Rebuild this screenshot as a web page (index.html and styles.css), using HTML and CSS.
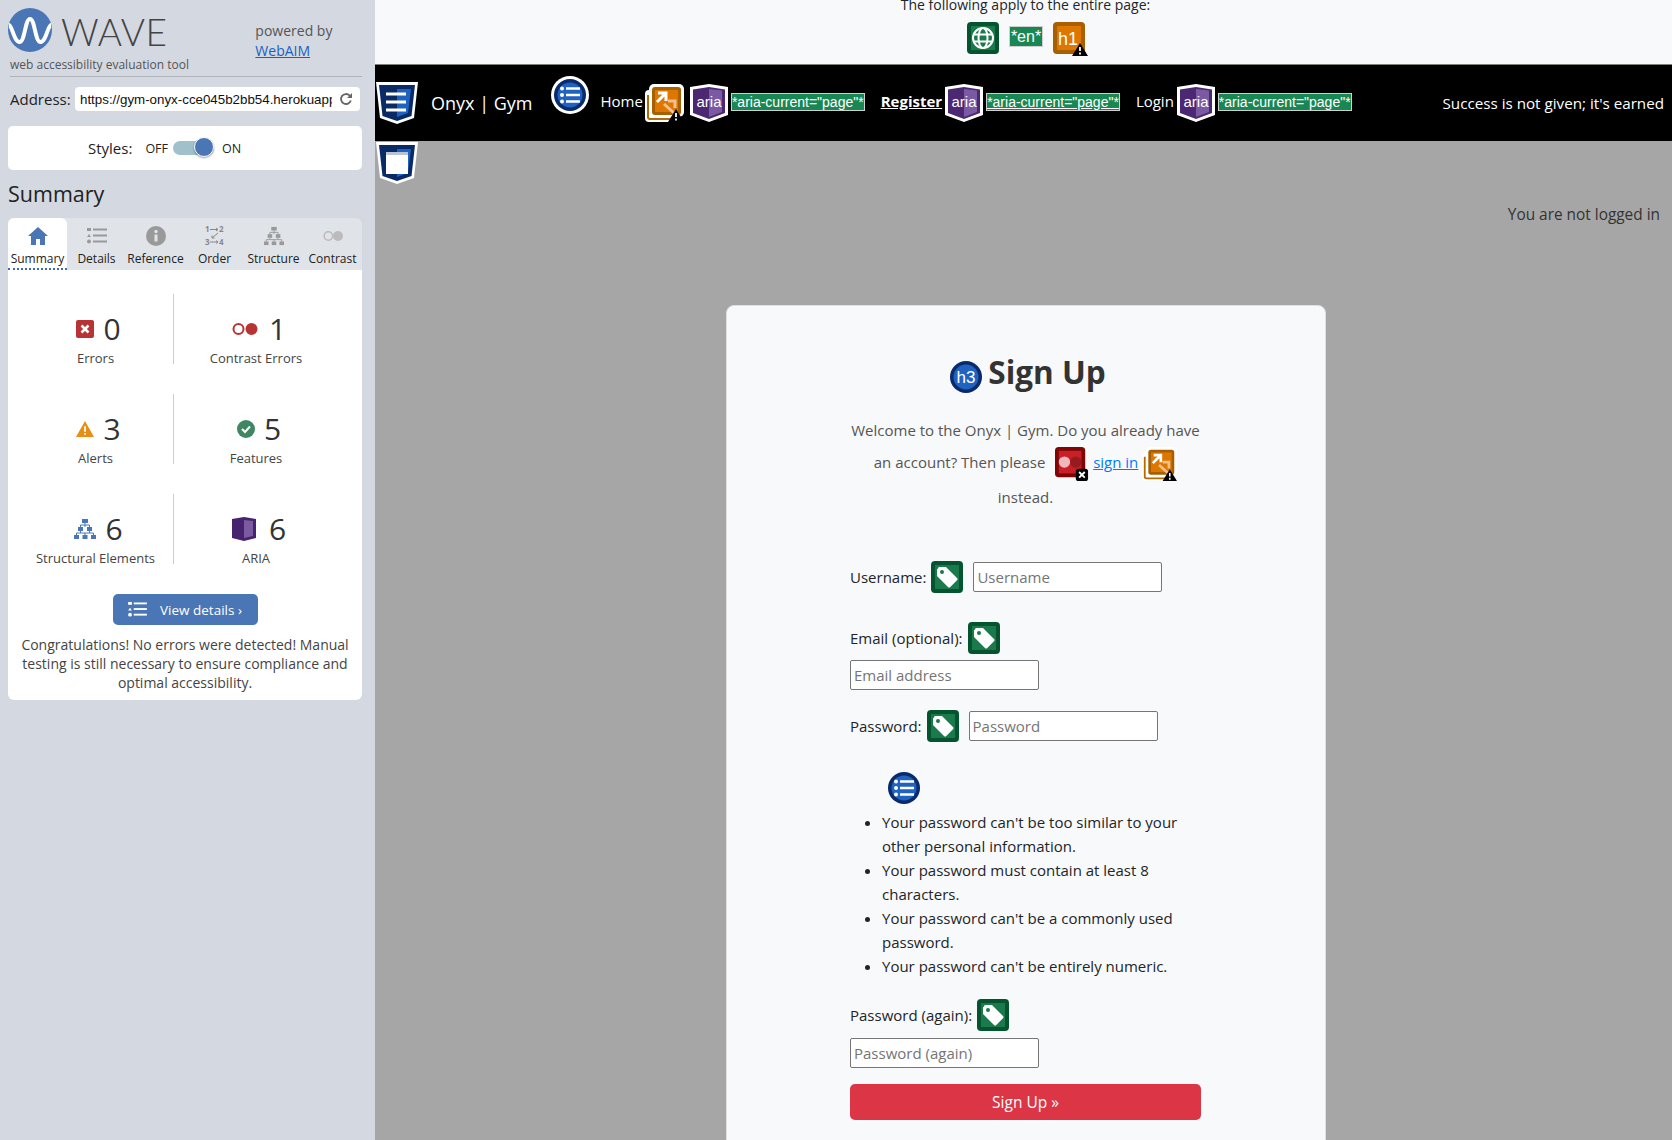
FILE: index.html
```html
<!DOCTYPE html>
<html lang="en">

<head>
    <meta charset="UTF-8">
    <meta name="viewport" content="width=device-width, initial-scale=1.0">
    <title>Onyx | Gym - Sign Up</title>
    <link rel="stylesheet" href="styles.css">
</head>

<body>
    <svg class="sprite" aria-hidden="true">
        <symbol id="tag" viewBox="0 0 32 32">
            <rect width="32" height="32" rx="4" fill="#04552f"/>
            <rect x="4" y="4" width="24" height="24" fill="#1a7a4b"/>
            <path d="M7 7.500C7 6.700 7.700 6 8.500 6H15L26 17C26.700 17.700 26.700 18.600 26 19.300L19.300 26C18.600 26.700 17.700 26.700 17 26L6 15V8.500z" fill="#fff"/>
            <circle cx="11" cy="11" r="2" fill="#1a7a4b"/>
        </symbol>
        <symbol id="aria" viewBox="0 0 38 38">
            <path d="M0 3L19 0L38 3V31L19 38L0 31z" fill="#fff"/>
            <path d="M3 5.500L19 3L35 5.500V29L19 35L3 29z" fill="#4c2772"/>
            <path d="M19 5L32 6.500V28L19 33z" fill="#7a5ba3"/>
        </symbol>
        <symbol id="extlink" viewBox="0 0 39 38">
            <rect x="0" y="6" width="32" height="32" rx="4" fill="#fff"/>
            <rect x="4" y="0" width="35" height="33" rx="5" fill="#fff"/>
            <path d="M3 11V33C3 34 4 35 5 35H28" fill="none" stroke="#b56a00" stroke-width="2"/>
            <rect x="7" y="3" width="29" height="28" rx="3" fill="#a85f00"/>
            <rect x="10" y="6" width="23" height="22" fill="#dd7700"/>
            <path d="M20 20L30 29M24 17H31V24" transform="translate(-1 0)" fill="none" stroke="#f2c08e" stroke-width="3"/>
            <path d="M13 9H21V17M21 9L12 18" fill="none" stroke="#fff" stroke-width="3"/>
            <path d="M23 38L31 25L39 38z" fill="#000"/>
            <path d="M31 29V33M31 34.500V36.500" stroke="#fff" stroke-width="1.800"/>
        </symbol>
        <symbol id="contrast" viewBox="0 0 36 36">
            <rect width="32" height="32" rx="4" fill="#7d0606"/>
            <rect x="4" y="4" width="24" height="24" fill="#c92027"/>
            <circle cx="10" cy="16" r="6" fill="#f1b8bb"/>
            <circle cx="22" cy="16" r="6" fill="#961a1e"/>
            <rect x="22" y="23" width="13" height="13" rx="3" fill="#000"/>
            <path d="M25.500 26.500L31.500 32.500M31.500 26.500L25.500 32.500" stroke="#fff" stroke-width="2"/>
        </symbol>
        <symbol id="list" viewBox="0 0 32 32">
            <circle cx="16" cy="16" r="16" fill="#0a2a6e"/>
            <circle cx="16" cy="16" r="12.500" fill="#1f62c0"/>
            <path d="M12 9.500H26M12 16H26M12 22.500H26" stroke="#fff" stroke-width="2.400"/>
            <circle cx="8" cy="9.500" r="2" fill="#fff"/>
            <circle cx="8" cy="16" r="2" fill="#fff"/>
            <circle cx="8" cy="22.500" r="2" fill="#fff"/>
        </symbol>
        <symbol id="shield" viewBox="0 0 42 42">
            <path d="M0 0H42L38 36L21 42L4 36z" fill="#fff"/>
            <path d="M3 3H39L35.500 34L21 39L6.500 34z" fill="#0a2a66"/>
            <path d="M21 7H35L32 31L21 35z" fill="#1f62c0"/>
        </symbol>
        <symbol id="bullets" viewBox="0 0 20 16">
            <rect x="0" y="0" width="4" height="3"/>
            <path d="M2 6L4 9H0z"/>
            <circle cx="2" cy="13.500" r="2"/>
            <rect x="6" y="0.500" width="14" height="2"/>
            <rect x="6" y="6.500" width="14" height="2"/>
            <rect x="6" y="12.500" width="14" height="2"/>
        </symbol>
        <symbol id="tree" viewBox="0 0 22 20">
            <rect x="8" y="0" width="6" height="4"/>
            <rect x="4" y="8" width="5" height="4"/>
            <rect x="13" y="8" width="5" height="4"/>
            <rect x="0" y="16" width="5" height="4"/>
            <rect x="8.500" y="16" width="5" height="4"/>
            <rect x="17" y="16" width="5" height="4"/>
            <path d="M11 4V8M6.500 6H15.500V8M6.500 6V8M6.500 12V14M15.500 12V14M2.500 14H19.500V16M2.500 14V16M11 14V16" fill="none" stroke="currentColor"/>
        </symbol>
    </svg>

    <aside class="sidebar">
        <div class="brand">
            <svg class="brand-logo" viewBox="0 0 44 44">
                <circle cx="22" cy="22" r="22" fill="#4a76b5"/>
                <path d="M1 17C4 17 6 34 11.500 34C17 34 17 11 22 11C27 11 27 34 32.500 34C38 34 40 17 43 17" fill="none" stroke="#fff" stroke-width="4"/>
            </svg>
            <span class="brand-name">WAVE</span>
            <div class="powered">powered by<br><a href="#">WebAIM</a></div>
        </div>
        <div class="tagline">web accessibility evaluation tool</div>

        <div class="address">
            <label class="address-label" for="address">Address:</label>
            <div class="address-box">
                <input class="address-input" id="address" type="text" value="https://gym-onyx-cce045b2bb54.herokuapp.com/accounts/signup/">
                <svg class="reload" viewBox="0 0 14 14"><path d="M11.800 8.500A5 5 0 1 1 10.500 3.400L12.500 5" fill="none" stroke="#666" stroke-width="1.800"/><path d="M13 1V6H8z" fill="#666"/></svg>
            </div>
        </div>

        <div class="styles-box">
            <span class="styles-label">Styles:</span>
            <span class="styles-off">OFF</span>
            <span class="toggle"><span class="toggle-knob"></span></span>
            <span class="styles-on">ON</span>
        </div>

        <h2 class="summary-title">Summary</h2>

        <div class="tabs">
            <div class="tab active">
                <svg class="tab-icon" viewBox="0 0 20 18"><path d="M10 0L20 9H17V18H12V12H8V18H3V9H0z" fill="#4a76b5"/></svg>
                <span>Summary</span>
            </div>
            <div class="tab">
                <svg class="tab-icon grey"><use href="#bullets"/></svg>
                <span>Details</span>
            </div>
            <div class="tab">
                <svg class="tab-icon" viewBox="0 0 20 20"><circle cx="10" cy="10" r="10" fill="#999"/><rect x="8.500" y="8.500" width="3" height="7" fill="#e0e3e8"/><circle cx="10" cy="5.500" r="1.700" fill="#e0e3e8"/></svg>
                <span>Reference</span>
            </div>
            <div class="tab">
                <svg class="tab-icon order" viewBox="0 -3 20 26">
                    <text class="order-digit" x="0" y="6">1</text>
                    <text class="order-digit" x="14" y="6">2</text>
                    <text class="order-digit" x="0" y="19">3</text>
                    <text class="order-digit" x="14" y="19">4</text>
                    <path d="M5 3.500H13M11 2L13 3.500L11 5M5 16H13M11 14.500L13 16L11 17.500M13 7L7 12M7 9.500V12H9.500" fill="none" stroke="#888"/>
                </svg>
                <span>Order</span>
            </div>
            <div class="tab">
                <svg class="tab-icon grey"><use href="#tree"/></svg>
                <span>Structure</span>
            </div>
            <div class="tab">
                <svg class="tab-icon" viewBox="0 0 26 14"><circle cx="7" cy="7" r="5.500" fill="none" stroke="#bbb" stroke-width="2"/><circle cx="19.500" cy="7" r="6.500" fill="#bbb"/></svg>
                <span>Contrast</span>
            </div>
        </div>

        <div class="panel">
            <div class="stats">
                <div class="stat">
                    <div class="stat-main">
                        <svg class="stat-icon" viewBox="0 0 18 18"><rect width="18" height="18" rx="2" fill="#b83333"/><path d="M5.500 5.500L12.500 12.500M12.500 5.500L5.500 12.500" stroke="#fff" stroke-width="2.500"/></svg>
                        <span class="stat-num">0</span>
                    </div>
                    <div class="stat-label">Errors</div>
                </div>
                <div class="stat">
                    <div class="stat-main">
                        <svg class="stat-icon wide" viewBox="0 0 26 14"><circle cx="6.500" cy="7" r="5" fill="none" stroke="#b83333" stroke-width="2"/><circle cx="19.500" cy="7" r="6" fill="#b83333"/></svg>
                        <span class="stat-num">1</span>
                    </div>
                    <div class="stat-label">Contrast Errors</div>
                </div>
                <div class="stat">
                    <div class="stat-main">
                        <svg class="stat-icon" viewBox="0 0 20 18"><path d="M10 0L20 18H0z" fill="#e88e14"/><rect x="9" y="6" width="2" height="6" fill="#fff"/><rect x="9" y="13.500" width="2" height="2" fill="#fff"/></svg>
                        <span class="stat-num">3</span>
                    </div>
                    <div class="stat-label">Alerts</div>
                </div>
                <div class="stat">
                    <div class="stat-main">
                        <svg class="stat-icon" viewBox="0 0 18 18"><circle cx="9" cy="9" r="9" fill="#3f8763"/><path d="M5 9L8 12L13 6.500" fill="none" stroke="#fff" stroke-width="2"/></svg>
                        <span class="stat-num">5</span>
                    </div>
                    <div class="stat-label">Features</div>
                </div>
                <div class="stat">
                    <div class="stat-main">
                        <svg class="stat-icon blue"><use href="#tree"/></svg>
                        <span class="stat-num">6</span>
                    </div>
                    <div class="stat-label">Structural Elements</div>
                </div>
                <div class="stat">
                    <div class="stat-main">
                        <svg class="stat-icon book" viewBox="0 0 24 24"><path d="M0 2L12 0L24 2V21L12 24L0 21z" fill="#46226f"/><path d="M12 3L21 4V19L12 21z" fill="#7b5a9f"/></svg>
                        <span class="stat-num">6</span>
                    </div>
                    <div class="stat-label">ARIA</div>
                </div>
            </div>
            <button class="details-btn">
                <svg class="details-icon"><use href="#bullets"/></svg>
                View details &#8250;
            </button>
            <p class="congrats">Congratulations! No errors were detected! Manual testing is still necessary to ensure compliance and optimal accessibility.</p>
        </div>
    </aside>

    <main class="page">
        <div class="page-top">
            <p class="page-note">The following apply to the entire page:</p>
            <div class="page-icons">
                <svg class="wave-icon" viewBox="0 0 32 32">
                    <rect width="32" height="32" rx="4" fill="#04552f"/>
                    <rect x="4" y="4" width="24" height="24" fill="#1a7a4b"/>
                    <g fill="none" stroke="#fff" stroke-width="2">
                        <circle cx="16" cy="16" r="10"/>
                        <ellipse cx="16" cy="16" rx="4.500" ry="10"/>
                        <path d="M7 12.500H25M7 19.500H25"/>
                    </g>
                </svg>
                <span class="badge lang">*en*</span>
                <svg class="wave-icon heading" viewBox="0 0 36 36">
                    <rect width="32" height="32" rx="4" fill="#a85f00"/>
                    <rect x="4" y="4" width="24" height="24" fill="#dd7700"/>
                    <text class="icon-text" x="15" y="23" text-anchor="middle" font-size="18">h1</text>
                    <path d="M19 34L27 21L35 34z" fill="#000"/>
                    <path d="M27 25V29M27 30.500V32.500" stroke="#fff" stroke-width="1.800"/>
                </svg>
            </div>
        </div>

        <nav class="navbar">
            <svg class="shield"><use href="#shield"/><path d="M10 12H30M10 20H30M10 28H30" stroke="#fff" stroke-width="3"/></svg>
            <a class="nav-brand" href="#">Onyx | Gym</a>
            <svg class="nav-list" viewBox="0 0 38 38">
                <circle cx="19" cy="19" r="19" fill="#fff"/>
                <svg x="3" y="3" width="32" height="32"><use href="#list"/></svg>
            </svg>
            <a class="nav-link" href="#">Home</a>
            <svg class="ext-icon"><use href="#extlink"/></svg>
            <svg class="aria-icon" viewBox="0 0 38 38"><use href="#aria" width="38" height="38"/><text class="icon-text" x="19" y="23" text-anchor="middle" font-size="15">aria</text></svg>
            <span class="badge">*aria-current="page"*</span>
            <a class="nav-link current" href="#"><span class="current-text">Register</span>
                <svg class="aria-icon" viewBox="0 0 38 38"><use href="#aria" width="38" height="38"/><text class="icon-text" x="19" y="23" text-anchor="middle" font-size="15">aria</text></svg>
                <span class="badge">*aria-current="page"*</span>
            </a>
            <a class="nav-link login" href="#">Login</a>
            <svg class="aria-icon" viewBox="0 0 38 38"><use href="#aria" width="38" height="38"/><text class="icon-text" x="19" y="23" text-anchor="middle" font-size="15">aria</text></svg>
            <span class="badge">*aria-current="page"*</span>
            <span class="motto">Success is not given; it's earned</span>
        </nav>

        <svg class="shield main-mark"><use href="#shield"/><rect x="10" y="10" width="22" height="22" fill="#fff"/><rect x="10" y="10" width="22" height="3" fill="#b9c3d6"/></svg>

        <p class="login-note">You are not logged in</p>

        <section class="card">
            <div class="card-body">
                <h3 class="card-title">
                    <svg class="title-icon" viewBox="0 0 32 32"><circle cx="16" cy="16" r="16" fill="#0a2a6e"/><circle cx="16" cy="16" r="12.500" fill="#1f62c0"/><text class="icon-text" x="16" y="22" text-anchor="middle" font-size="17">h3</text></svg>
                    Sign Up
                </h3>
                <p class="intro">Welcome to the Onyx | Gym. Do you already have an account? Then please
                    <svg class="contrast-icon"><use href="#contrast"/></svg>
                    <a href="#">sign in</a>
                    <svg class="ext-icon small"><use href="#extlink"/></svg>
                    <br>instead.</p>

                <form class="form">
                    <div class="field first">
                        <label for="username">Username:</label>
                        <svg class="tag-icon"><use href="#tag"/></svg>
                        <input id="username" type="text" placeholder="Username">
                    </div>
                    <div class="field stacked">
                        <div class="field-head">
                            <label for="email">Email (optional):</label>
                            <svg class="tag-icon"><use href="#tag"/></svg>
                        </div>
                        <input id="email" type="text" placeholder="Email address">
                    </div>
                    <div class="field">
                        <label for="password1">Password:</label>
                        <svg class="tag-icon"><use href="#tag"/></svg>
                        <input id="password1" type="password" placeholder="Password">
                    </div>
                    <svg class="help-icon"><use href="#list"/></svg>
                    <ul class="help">
                        <li>Your password can't be too similar to your other personal information.</li>
                        <li>Your password must contain at least 8 characters.</li>
                        <li>Your password can't be a commonly used password.</li>
                        <li>Your password can't be entirely numeric.</li>
                    </ul>
                    <div class="field stacked again">
                        <div class="field-head">
                            <label for="password2">Password (again):</label>
                            <svg class="tag-icon"><use href="#tag"/></svg>
                        </div>
                        <input id="password2" type="password" placeholder="Password (again)">
                    </div>
                    <button class="submit" type="button">Sign Up &raquo;</button>
                </form>
            </div>
        </section>
    </main>
</body>

</html>
```

FILE: styles.css
```css
html,
body {
    height: 100%;
    margin: 0;
    overflow: hidden;
}

body {
    display: flex;
    font-family: "Open Sans", "Noto Sans", sans-serif;
    color: #212529;
}

.sprite {
    display: none;
}

/* sidebar */

.sidebar {
    width: 375px;
    flex-shrink: 0;
    box-sizing: border-box;
    padding: 8px 13px 0 8px;
    background-color: #d4d8e0;
    color: #333;
}

.brand {
    display: flex;
    align-items: flex-start;
}

.brand-logo {
    width: 44px;
    height: 44px;
}

.brand-name {
    margin: 2px 0 0 9px;
    font-family: "Lato", sans-serif;
    font-weight: 300;
    font-size: 37px;
    line-height: 44px;
    letter-spacing: 0.5px;
    color: #444;
}

.powered {
    margin: 13px 0 0 88px;
    font-size: 14px;
    line-height: 20px;
    color: #555;
}

.powered a {
    color: #1a5fc4;
}

.tagline {
    margin: -4px 0 0 2px;
    padding-bottom: 3px;
    font-size: 12px;
    line-height: 16px;
    color: #555;
    border-bottom: 1px solid #b0b3b8;
}

.address {
    display: flex;
    align-items: center;
    margin-top: 10px;
}

.address-label {
    width: 67px;
    padding-left: 2px;
    box-sizing: border-box;
    font-size: 15px;
    color: #222;
}

.address-box {
    display: flex;
    align-items: center;
    width: 285px;
    height: 24px;
    background-color: #fff;
    border-radius: 4px;
}

.address-input {
    width: 252px;
    margin-left: 5px;
    padding: 0;
    border: 0;
    outline: 0;
    font-family: "Liberation Sans", Arial, sans-serif;
    font-size: 13.330px;
    color: #111;
}

.reload {
    width: 14px;
    height: 14px;
    margin-left: 7px;
}

.styles-box {
    display: flex;
    align-items: center;
    height: 44px;
    margin-top: 15px;
    padding-left: 80px;
    background-color: #fff;
    border-radius: 5px;
    font-size: 12.500px;
    color: #222;
}

.styles-label {
    margin-right: 13px;
    font-size: 15px;
}

.toggle {
    position: relative;
    width: 41px;
    height: 14px;
    margin: 0 8px 0 5px;
    background-color: #a0c0cc;
    border-radius: 7px;
}

.toggle-knob {
    position: absolute;
    top: -4px;
    right: 0;
    width: 20px;
    height: 20px;
    background-color: #4a76b5;
    border: 1px solid #fff;
    box-sizing: border-box;
    border-radius: 50%;
    box-shadow: 0 1px 2px rgba(0, 0, 0, 0.4);
}

.summary-title {
    margin: 9px 0 10px;
    font-size: 21.500px;
    font-weight: 400;
    line-height: 29px;
    color: #222;
}

.tabs {
    display: flex;
    height: 52px;
    background-color: #e0e3e8;
    border-radius: 6px 6px 0 0;
}

.tab {
    display: flex;
    flex-direction: column;
    align-items: center;
    justify-content: flex-end;
    width: 59px;
    height: 52px;
    box-sizing: border-box;
    padding-bottom: 3px;
    font-size: 12px;
    line-height: 16px;
    color: #222;
    white-space: nowrap;
}

.tab.active {
    background-color: #fff;
    border-radius: 6px 6px 0 0;
    border-bottom: 2px dotted #3d6bb0;
    padding-bottom: 1px;
}

.tab-icon {
    width: 20px;
    height: 20px;
    margin-bottom: 5px;
}

.tab-icon.grey {
    fill: #999;
    color: #999;
}

.tab-icon.order {
    height: 26px;
    margin-bottom: 2px;
}

.order-digit {
    font-family: "Open Sans", sans-serif;
    font-size: 8px;
    font-weight: 700;
    fill: #888;
}

.panel {
    height: 430px;
    box-sizing: border-box;
    padding-top: 24px;
    background-color: #fff;
    border-radius: 0 0 6px 6px;
    text-align: center;
}

.stats {
    display: grid;
    grid-template-columns: 166px 1fr;
    row-gap: 30px;
}

.stat {
    height: 70px;
}

.stat:nth-child(odd) {
    box-sizing: border-box;
    padding-left: 10px;
    border-right: 1px solid #ccc;
}

.stat:nth-child(even) {
    padding-right: 24px;
}

.stat-main {
    display: flex;
    align-items: center;
    justify-content: center;
    height: 40px;
    margin-top: 15px;
    padding-left: 6px;
}

.stat-icon {
    width: 18px;
    height: 18px;
    margin-right: 9px;
}

.stat-icon.wide {
    width: 26px;
    margin-right: 11px;
}

.stat-icon.blue {
    width: 22px;
    height: 20px;
    fill: #4a76b5;
    color: #4a76b5;
}

.stat-icon.book {
    width: 24px;
    height: 24px;
    margin-right: 13px;
}

.stat-num {
    font-size: 30px;
    line-height: 40px;
    color: #333;
}

.stat-label {
    font-size: 13px;
    line-height: 18px;
    color: #444;
}

.details-btn {
    display: inline-flex;
    align-items: center;
    justify-content: center;
    width: 145px;
    height: 31px;
    margin-top: 30px;
    padding: 0;
    background-color: #4a76b5;
    border: 0;
    border-radius: 5px;
    font-family: inherit;
    font-size: 13.500px;
    color: #fff;
}

.details-icon {
    width: 19px;
    height: 15px;
    margin-right: 13px;
    fill: #fff;
}

.congrats {
    margin: 10px 12px 0;
    font-size: 14px;
    line-height: 19px;
    color: #444;
}

/* page */

.page {
    flex: 1;
    min-width: 0;
    height: 1140px;
    overflow: hidden;
    background-color: #a6a6a6;
}

.page-top {
    display: flex;
    flex-direction: column;
    justify-content: flex-end;
    align-items: center;
    height: 64px;
    overflow: hidden;
    background-color: #f8f9fa;
    border-bottom: 1px solid #7c8278;
}

.page-note {
    margin: 0 0 7px 4px;
    font-size: 14px;
    line-height: 20px;
    color: #212529;
}

.page-icons {
    display: flex;
    align-items: flex-start;
    height: 34px;
    margin: 0 0 8px 5px;
}

.wave-icon {
    width: 32px;
    height: 32px;
}

.wave-icon.heading {
    width: 36px;
    height: 36px;
    margin-right: -4px;
}

.badge {
    display: inline-block;
    box-sizing: border-box;
    margin-bottom: 3px;
    background-color: #198754;
    border: 1px solid #cfcfcf;
    font-family: "Liberation Sans", Arial, sans-serif;
    font-size: 14px;
    font-weight: 400;
    line-height: 16px;
    color: #fff;
    white-space: nowrap;
}

.badge.lang {
    margin: 4px 10px 0;
    padding: 0 1px;
    font-size: 16px;
    line-height: 19px;
}

.icon-text {
    font-family: "Liberation Sans", Arial, sans-serif;
    font-weight: 400;
    fill: #fff;
}

.navbar {
    display: flex;
    align-items: center;
    height: 76px;
    background-color: #000;
    color: #fff;
    font-size: 15px;
}

.navbar a {
    color: #fff;
    text-decoration: none;
}

.shield {
    width: 42px;
    height: 42px;
    margin-left: 1px;
    flex-shrink: 0;
}

.nav-brand {
    margin-left: 13px;
    font-size: 18px;
}

.nav-list {
    align-self: flex-start;
    width: 38px;
    height: 38px;
    margin: 11px 0 0 18px;
}

.nav-link {
    display: flex;
    align-items: center;
    margin-left: 12px;
    padding-bottom: 4px;
}

.ext-icon {
    width: 39px;
    height: 38px;
    margin-left: 2px;
}

.ext-icon.small {
    width: 35px;
    height: 34px;
    margin-left: 0;
    vertical-align: middle;
}

.aria-icon {
    width: 38px;
    height: 38px;
    margin: 0 3px 0 6px;
    flex-shrink: 0;
}

.navbar .current {
    margin-left: 16px;
    padding-bottom: 0;
    font-weight: 700;
}

.navbar .current-text {
    margin-bottom: 4px;
    text-decoration: underline;
}

.navbar .current .badge {
    text-decoration: underline;
}

.navbar .current .aria-icon {
    margin-left: 3px;
}

.nav-link.login {
    margin-left: 16px;
}

.login + .aria-icon {
    margin-left: 3px;
}

.motto {
    margin-left: auto;
    padding-right: 8px;
    font-size: 15.200px;
}

.main-mark {
    display: block;
    margin-top: 1px;
}

.login-note {
    margin: 21px 12px 0 0;
    font-size: 15.400px;
    line-height: 20px;
    text-align: right;
    color: #333;
}

.card {
    box-sizing: border-box;
    width: 600px;
    margin: 80px 0 0 351px;
    padding: 48px 0 120px;
    background-color: #f8f9fa;
    border-radius: 8px;
    border: 1px solid #e0e0e0;
}

.card-body {
    width: 351px;
    margin-left: 123px;
}

.card-title {
    display: flex;
    align-items: flex-start;
    justify-content: center;
    gap: 6px;
    margin: 0 0 0 5px;
    font-size: 31.500px;
    font-weight: 700;
    line-height: 36px;
    color: #333;
}

.title-icon {
    width: 32px;
    height: 32px;
    margin-top: 7px;
}

.intro {
    margin: 21px 0 0;
    font-size: 15px;
    line-height: 32px;
    text-align: center;
    color: #555;
}

.intro a {
    color: #007bff;
}

.contrast-icon {
    width: 34px;
    height: 34px;
    margin-left: 6px;
    vertical-align: middle;
}

.form {
    margin-top: 48px;
    font-size: 15px;
}

.field {
    display: flex;
    align-items: center;
    margin-bottom: 20px;
}

.field.first {
    margin-bottom: 29px;
}

.field.stacked {
    display: block;
}

.field-head {
    display: flex;
    align-items: center;
}

.field input {
    box-sizing: border-box;
    width: 189px;
    height: 30px;
    margin-left: 10px;
    padding: 1px 3px;
    background-color: #fff;
    border: 1px solid #767676;
    border-radius: 2px;
    font-family: inherit;
    font-size: 15px;
}

.field.stacked input {
    display: block;
    margin: 6px 0 0;
}

.field.again input {
    margin-top: 7px;
}

.field input::placeholder {
    color: #757575;
}

.tag-icon {
    width: 32px;
    height: 32px;
    margin-left: 5px;
}

.help-icon {
    display: block;
    width: 32px;
    height: 32px;
    margin: 30px 0 6px 38px;
}

.help {
    margin: 0 0 21px;
    padding-left: 32px;
    line-height: 24px;
    font-size: 15px;
}

.field.again {
    margin-bottom: 16px;
}

.submit {
    display: block;
    width: 351px;
    height: 36px;
    padding: 0;
    background-color: #dc3545;
    border: 0;
    border-radius: 5px;
    font-family: inherit;
    font-size: 15.500px;
    color: #fff;
}
```
